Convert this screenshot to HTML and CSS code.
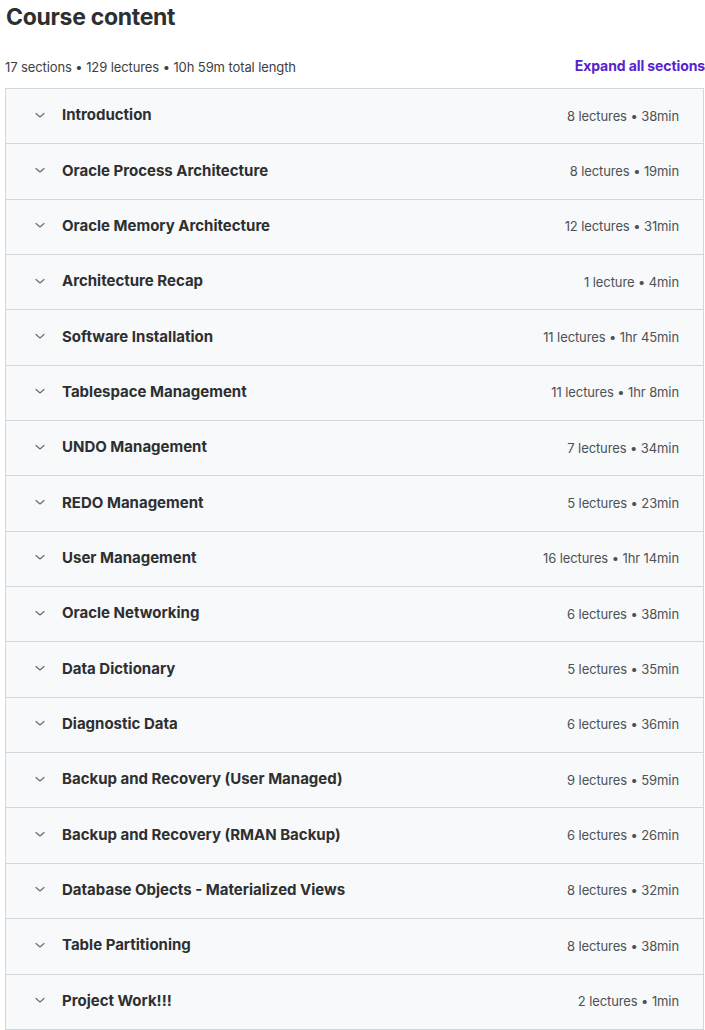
FILE: index.html
```html
<!DOCTYPE html>
<html lang="en">
<head>
<meta charset="utf-8">
<title>Course content</title>
<link rel="stylesheet" href="styles.css">
</head>
<body>
<div class="course">
  <h2 class="course-title">Course content</h2>
  <div class="course-summary">
    <span class="summary-text">17 sections • 129 lectures • 10h 59m total length</span>
    <button class="expand-all">Expand all sections</button>
  </div>
  <div class="sections">
    <div class="section"><span class="chev"><svg viewBox="0 0 12 12"><path d="M2 4.5 6 8l4-3.5"/></svg></span><span class="section-name">Introduction</span><span class="section-meta">8 lectures • 38min</span></div>
    <div class="section"><span class="chev"><svg viewBox="0 0 12 12"><path d="M2 4.5 6 8l4-3.5"/></svg></span><span class="section-name">Oracle Process Architecture</span><span class="section-meta">8 lectures • 19min</span></div>
    <div class="section"><span class="chev"><svg viewBox="0 0 12 12"><path d="M2 4.5 6 8l4-3.5"/></svg></span><span class="section-name">Oracle Memory Architecture</span><span class="section-meta">12 lectures • 31min</span></div>
    <div class="section"><span class="chev"><svg viewBox="0 0 12 12"><path d="M2 4.5 6 8l4-3.5"/></svg></span><span class="section-name">Architecture Recap</span><span class="section-meta">1 lecture • 4min</span></div>
    <div class="section"><span class="chev"><svg viewBox="0 0 12 12"><path d="M2 4.5 6 8l4-3.5"/></svg></span><span class="section-name">Software Installation</span><span class="section-meta">11 lectures • 1hr 45min</span></div>
    <div class="section"><span class="chev"><svg viewBox="0 0 12 12"><path d="M2 4.5 6 8l4-3.5"/></svg></span><span class="section-name">Tablespace Management</span><span class="section-meta">11 lectures • 1hr 8min</span></div>
    <div class="section"><span class="chev"><svg viewBox="0 0 12 12"><path d="M2 4.5 6 8l4-3.5"/></svg></span><span class="section-name">UNDO Management</span><span class="section-meta">7 lectures • 34min</span></div>
    <div class="section"><span class="chev"><svg viewBox="0 0 12 12"><path d="M2 4.5 6 8l4-3.5"/></svg></span><span class="section-name">REDO Management</span><span class="section-meta">5 lectures • 23min</span></div>
    <div class="section"><span class="chev"><svg viewBox="0 0 12 12"><path d="M2 4.5 6 8l4-3.5"/></svg></span><span class="section-name">User Management</span><span class="section-meta">16 lectures • 1hr 14min</span></div>
    <div class="section"><span class="chev"><svg viewBox="0 0 12 12"><path d="M2 4.5 6 8l4-3.5"/></svg></span><span class="section-name">Oracle Networking</span><span class="section-meta">6 lectures • 38min</span></div>
    <div class="section"><span class="chev"><svg viewBox="0 0 12 12"><path d="M2 4.5 6 8l4-3.5"/></svg></span><span class="section-name">Data Dictionary</span><span class="section-meta">5 lectures • 35min</span></div>
    <div class="section"><span class="chev"><svg viewBox="0 0 12 12"><path d="M2 4.5 6 8l4-3.5"/></svg></span><span class="section-name">Diagnostic Data</span><span class="section-meta">6 lectures • 36min</span></div>
    <div class="section"><span class="chev"><svg viewBox="0 0 12 12"><path d="M2 4.5 6 8l4-3.5"/></svg></span><span class="section-name">Backup and Recovery (User Managed)</span><span class="section-meta">9 lectures • 59min</span></div>
    <div class="section"><span class="chev"><svg viewBox="0 0 12 12"><path d="M2 4.5 6 8l4-3.5"/></svg></span><span class="section-name">Backup and Recovery (RMAN Backup)</span><span class="section-meta">6 lectures • 26min</span></div>
    <div class="section"><span class="chev"><svg viewBox="0 0 12 12"><path d="M2 4.5 6 8l4-3.5"/></svg></span><span class="section-name">Database Objects - Materialized Views</span><span class="section-meta">8 lectures • 32min</span></div>
    <div class="section"><span class="chev"><svg viewBox="0 0 12 12"><path d="M2 4.5 6 8l4-3.5"/></svg></span><span class="section-name">Table Partitioning</span><span class="section-meta">8 lectures • 38min</span></div>
    <div class="section"><span class="chev"><svg viewBox="0 0 12 12"><path d="M2 4.5 6 8l4-3.5"/></svg></span><span class="section-name">Project Work!!!</span><span class="section-meta">2 lectures • 1min</span></div>
  </div>
</div>
</body>
</html>
```
FILE: styles.css
```css
* { box-sizing: border-box; }

html, body {
  margin: 0;
  padding: 0;
  background: #ffffff;
}

body {
  font-family: Inter, "Noto Sans", "Liberation Sans", sans-serif;
  color: #2d2f31;
}

.course {
  padding: 0 0 0 5px;
}

.course-title {
  margin: 0;
  padding: 3px 0 0 1px;
  font-size: 23px;
  line-height: 28px;
  font-weight: 700;
  letter-spacing: -0.3px;
}

.course-summary {
  display: flex;
  align-items: center;
  justify-content: space-between;
  height: 24px;
  margin-top: 24px;
  margin-bottom: 9px;
}

.summary-text {
  font-size: 13px;
  color: #3e4143;
  letter-spacing: -0.1px;
}

.expand-all {
  border: 0;
  background: none;
  padding: 0;
  margin-top: -3px;
  font-family: inherit;
  font-size: 14px;
  font-weight: 700;
  color: #5624d0;
  letter-spacing: -0.1px;
  cursor: pointer;
}

.sections {
  width: 699px;
  border: 1px solid #d1d7dc;
  border-bottom: 0;
}

.section {
  display: flex;
  align-items: center;
  height: 55.35px;
  padding: 0 24px 0 28px;
  padding-bottom: 3px;
  background: #f7f9fa;
  border-bottom: 1px solid #d1d7dc;
}

.chev {
  display: flex;
  width: 12px;
  height: 12px;
  margin-right: 16px;
}

.chev svg {
  width: 12px;
  height: 12px;
  fill: none;
  stroke: #6a6f73;
  stroke-width: 1.2;
  stroke-linecap: round;
  stroke-linejoin: round;
}

.section-name {
  flex: 1;
  font-size: 15px;
  font-weight: 700;
  letter-spacing: 0;
}

.section-meta {
  font-size: 13px;
  color: #4d5156;
  letter-spacing: -0.1px;
  padding-top: 2px;
}
```
